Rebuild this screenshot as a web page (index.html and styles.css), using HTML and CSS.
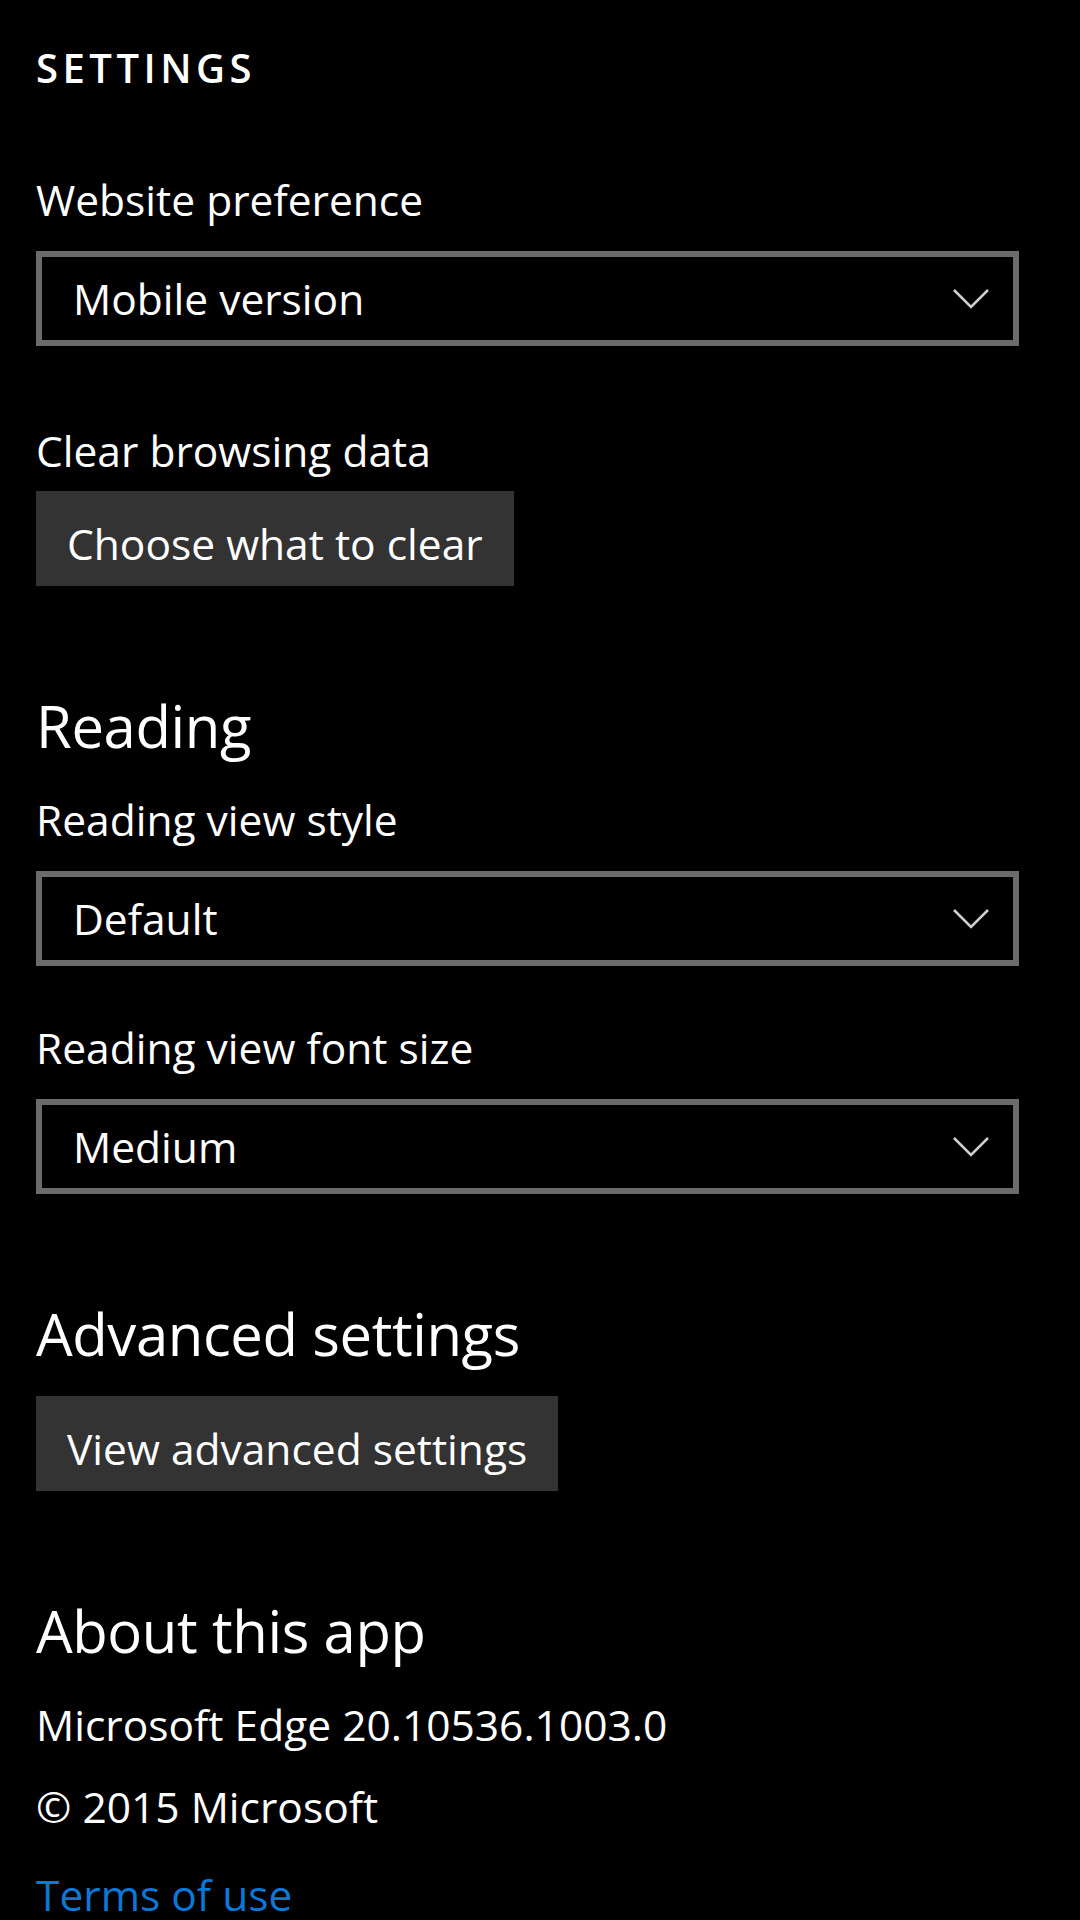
FILE: index.html
```html
<!DOCTYPE html>
<html lang="en">
<head>
    <meta charset="UTF-8">
    <meta name="viewport" content="width=device-width, initial-scale=1.0">
    <title>Settings</title>
    <link rel="stylesheet" href="styles.css">
</head>
<body>
    <main class="settings">
        <h1 class="page-title">SETTINGS</h1>

        <div class="field-label first">Website preference</div>
        <div class="combo">
            <span>Mobile version</span>
            <svg class="chevron" width="36" height="20" viewBox="0 0 36 20"><path d="M1 1 L18 18 L35 1" /></svg>
        </div>

        <div class="field-label after-combo">Clear browsing data</div>
        <button class="action">Choose what to clear</button>

        <h2 class="section-title">Reading</h2>
        <div class="field-label after-title">Reading view style</div>
        <div class="combo">
            <span>Default</span>
            <svg class="chevron" width="36" height="20" viewBox="0 0 36 20"><path d="M1 1 L18 18 L35 1" /></svg>
        </div>

        <div class="field-label between">Reading view font size</div>
        <div class="combo">
            <span>Medium</span>
            <svg class="chevron" width="36" height="20" viewBox="0 0 36 20"><path d="M1 1 L18 18 L35 1" /></svg>
        </div>

        <h2 class="section-title">Advanced settings</h2>
        <button class="action tight">View advanced settings</button>

        <h2 class="section-title">About this app</h2>
        <div class="info after-title">Microsoft Edge 20.10536.1003.0</div>
        <div class="info after-title">© 2015 Microsoft</div>
        <a class="info link" href="#">Terms of use</a>
    </main>
</body>
</html>
```

FILE: styles.css
```css
* {
    margin: 0;
    padding: 0;
    box-sizing: border-box;
}

html,
body {
    background-color: #000;
}

body {
    font-family: 'Open Sans', 'Noto Sans', sans-serif;
    color: #fff;
    width: 1080px;
    height: 1920px;
    overflow: hidden;
}

.settings {
    width: 1019px;
    padding: 44px 0 0 36px;
    display: flex;
    flex-direction: column;
    align-items: flex-start;
}

.page-title {
    font-size: 40px;
    font-weight: 600;
    line-height: 48px;
    letter-spacing: 4.5px;
}

.field-label,
.info {
    font-size: 42.5px;
    line-height: 48px;
}

.field-label.first {
    margin-top: 84px;
}

.field-label.after-combo {
    margin-top: 81px;
}

.field-label.between {
    margin-top: 58px;
}

.after-title {
    margin-top: 34px;
}

.combo {
    width: 100%;
    height: 95px;
    margin-top: 27px;
    padding: 0 24px 0 31px;
    border: 6px solid #6b6b6b;
    display: flex;
    align-items: center;
    justify-content: space-between;
    font-size: 42.5px;
    line-height: 48px;
}

.chevron {
    fill: none;
    stroke: #cfcfcf;
    stroke-width: 2.5;
}

.action {
    margin-top: 16px;
    padding: 29px 31px 18px;
    border: none;
    background: #333;
    color: #fff;
    font-family: inherit;
    font-size: 42.5px;
    line-height: 48px;
}

.action.tight {
    margin-top: 26px;
}

.section-title {
    margin-top: 104px;
    font-size: 58px;
    font-weight: 400;
    line-height: 72px;
    letter-spacing: -0.4px;
}

.link {
    margin-top: 40px;
    color: #0a78d7;
    text-decoration: none;
}
```
